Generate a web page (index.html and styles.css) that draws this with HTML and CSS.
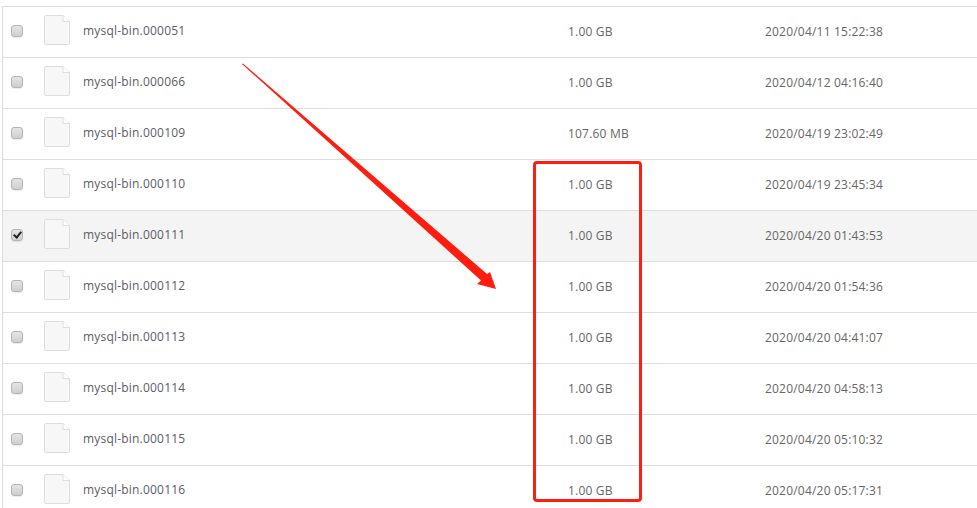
FILE: index.html
```html
<!DOCTYPE html>
<html lang="en">
<head>
<meta charset="utf-8">
<title>Binlog files</title>
<link rel="stylesheet" href="styles.css">
</head>
<body>
<div class="page">
<ul class="files">
<li class="row"><input class="check" type="checkbox"><svg class="file" viewBox="0 0 26 30"><path d="M1.500.5H19L25.500 6.500V28A1.500 1.500 0 0 1 24 29.500H2A1.500 1.500 0 0 1 .5 28V1.500A1 1 0 0 1 1.500.5Z"/><path class="fold" d="M19 .5V6.500H25.500"/></svg><span class="name">mysql-bin.000051</span><span class="size">1.00 GB</span><span class="date">2020/04/11 15:22:38</span></li>
<li class="row"><input class="check" type="checkbox"><svg class="file" viewBox="0 0 26 30"><path d="M1.500.5H19L25.500 6.500V28A1.500 1.500 0 0 1 24 29.500H2A1.500 1.500 0 0 1 .5 28V1.500A1 1 0 0 1 1.500.5Z"/><path class="fold" d="M19 .5V6.500H25.500"/></svg><span class="name">mysql-bin.000066</span><span class="size">1.00 GB</span><span class="date">2020/04/12 04:16:40</span></li>
<li class="row"><input class="check" type="checkbox"><svg class="file" viewBox="0 0 26 30"><path d="M1.500.5H19L25.500 6.500V28A1.500 1.500 0 0 1 24 29.500H2A1.500 1.500 0 0 1 .5 28V1.500A1 1 0 0 1 1.500.5Z"/><path class="fold" d="M19 .5V6.500H25.500"/></svg><span class="name">mysql-bin.000109</span><span class="size">107.60 MB</span><span class="date">2020/04/19 23:02:49</span></li>
<li class="row"><input class="check" type="checkbox"><svg class="file" viewBox="0 0 26 30"><path d="M1.500.5H19L25.500 6.500V28A1.500 1.500 0 0 1 24 29.500H2A1.500 1.500 0 0 1 .5 28V1.500A1 1 0 0 1 1.500.5Z"/><path class="fold" d="M19 .5V6.500H25.500"/></svg><span class="name">mysql-bin.000110</span><span class="size">1.00 GB</span><span class="date">2020/04/19 23:45:34</span></li>
<li class="row selected"><input class="check" type="checkbox" checked><svg class="file" viewBox="0 0 26 30"><path d="M1.500.5H19L25.500 6.500V28A1.500 1.500 0 0 1 24 29.500H2A1.500 1.500 0 0 1 .5 28V1.500A1 1 0 0 1 1.500.5Z"/><path class="fold" d="M19 .5V6.500H25.500"/></svg><span class="name">mysql-bin.000111</span><span class="size">1.00 GB</span><span class="date">2020/04/20 01:43:53</span></li>
<li class="row"><input class="check" type="checkbox"><svg class="file" viewBox="0 0 26 30"><path d="M1.500.5H19L25.500 6.500V28A1.500 1.500 0 0 1 24 29.500H2A1.500 1.500 0 0 1 .5 28V1.500A1 1 0 0 1 1.500.5Z"/><path class="fold" d="M19 .5V6.500H25.500"/></svg><span class="name">mysql-bin.000112</span><span class="size">1.00 GB</span><span class="date">2020/04/20 01:54:36</span></li>
<li class="row"><input class="check" type="checkbox"><svg class="file" viewBox="0 0 26 30"><path d="M1.500.5H19L25.500 6.500V28A1.500 1.500 0 0 1 24 29.500H2A1.500 1.500 0 0 1 .5 28V1.500A1 1 0 0 1 1.500.5Z"/><path class="fold" d="M19 .5V6.500H25.500"/></svg><span class="name">mysql-bin.000113</span><span class="size">1.00 GB</span><span class="date">2020/04/20 04:41:07</span></li>
<li class="row"><input class="check" type="checkbox"><svg class="file" viewBox="0 0 26 30"><path d="M1.500.5H19L25.500 6.500V28A1.500 1.500 0 0 1 24 29.500H2A1.500 1.500 0 0 1 .5 28V1.500A1 1 0 0 1 1.500.5Z"/><path class="fold" d="M19 .5V6.500H25.500"/></svg><span class="name">mysql-bin.000114</span><span class="size">1.00 GB</span><span class="date">2020/04/20 04:58:13</span></li>
<li class="row"><input class="check" type="checkbox"><svg class="file" viewBox="0 0 26 30"><path d="M1.500.5H19L25.500 6.500V28A1.500 1.500 0 0 1 24 29.500H2A1.500 1.500 0 0 1 .5 28V1.500A1 1 0 0 1 1.500.5Z"/><path class="fold" d="M19 .5V6.500H25.500"/></svg><span class="name">mysql-bin.000115</span><span class="size">1.00 GB</span><span class="date">2020/04/20 05:10:32</span></li>
<li class="row"><input class="check" type="checkbox"><svg class="file" viewBox="0 0 26 30"><path d="M1.500.5H19L25.500 6.500V28A1.500 1.500 0 0 1 24 29.500H2A1.500 1.500 0 0 1 .5 28V1.500A1 1 0 0 1 1.500.5Z"/><path class="fold" d="M19 .5V6.500H25.500"/></svg><span class="name">mysql-bin.000116</span><span class="size">1.00 GB</span><span class="date">2020/04/20 05:17:31</span></li>
</ul>
<div class="highlight"></div>
<svg class="arrow" viewBox="0 0 977 508"><polygon points="242,64 243,63.500 487,274 490,272 496,289 477,284 481,280.500"/></svg>
</div>
</body>
</html>
```
FILE: styles.css
```css
html, body {
  margin: 0;
  height: 100%;
  overflow: hidden;
  background: #fff;
}
.page {
  position: relative;
  height: 508px;
  overflow: hidden;
  padding: 6px 0 0 2px;
  box-sizing: border-box;
  font-family: "Open Sans", "Noto Sans", sans-serif;
  font-size: 12px;
  letter-spacing: .2px;
  color: #666;
}
.files {
  list-style: none;
  margin: 0;
  padding: 0;
  border-left: 1px solid #ddd;
}
.row {
  display: grid;
  grid-template-columns: 8px 12px 21px 26px 13px 485px 197px 1fr;
  height: 50px;
  align-items: center;
  border-top: 1px solid #ddd;
}
.selected {
  background: #f4f4f4;
}
.check {
  grid-column: 2;
  appearance: none;
  -webkit-appearance: none;
  width: 12px;
  height: 12px;
  margin: -2px 0 0;
  border: 1px solid #b4b4b4;
  border-radius: 3px;
  background: linear-gradient(#e4e4e4, #cfcfcf);
  box-shadow: 0 1px 1px rgba(0,0,0,.08);
  position: relative;
}
.check:checked::after {
  content: "";
  position: absolute;
  left: 3px;
  top: 0;
  width: 3px;
  height: 6px;
  border: solid #222;
  border-width: 0 2px 2px 0;
  transform: rotate(40deg);
}
.file {
  grid-column: 4;
  width: 26px;
  height: 30px;
  fill: #f7f7f7;
  stroke: #ddd;
  stroke-width: 1;
  margin-top: -4px;
}
.file .fold {
  fill: #fff;
}
.name {
  grid-column: 6;
  margin-top: -3px;
  color: #5c5c66;
}
.size {
  grid-column: 7;
  margin-top: -2px;
}
.date {
  grid-column: 8;
  margin-top: -2px;
}
.highlight {
  position: absolute;
  left: 533px;
  top: 161px;
  width: 103px;
  height: 335px;
  border: 3px solid #ff1d10;
  border-radius: 4px;
}
.arrow {
  position: absolute;
  left: 0;
  top: 0;
  width: 977px;
  height: 508px;
  fill: #ff1d10;
}
```
